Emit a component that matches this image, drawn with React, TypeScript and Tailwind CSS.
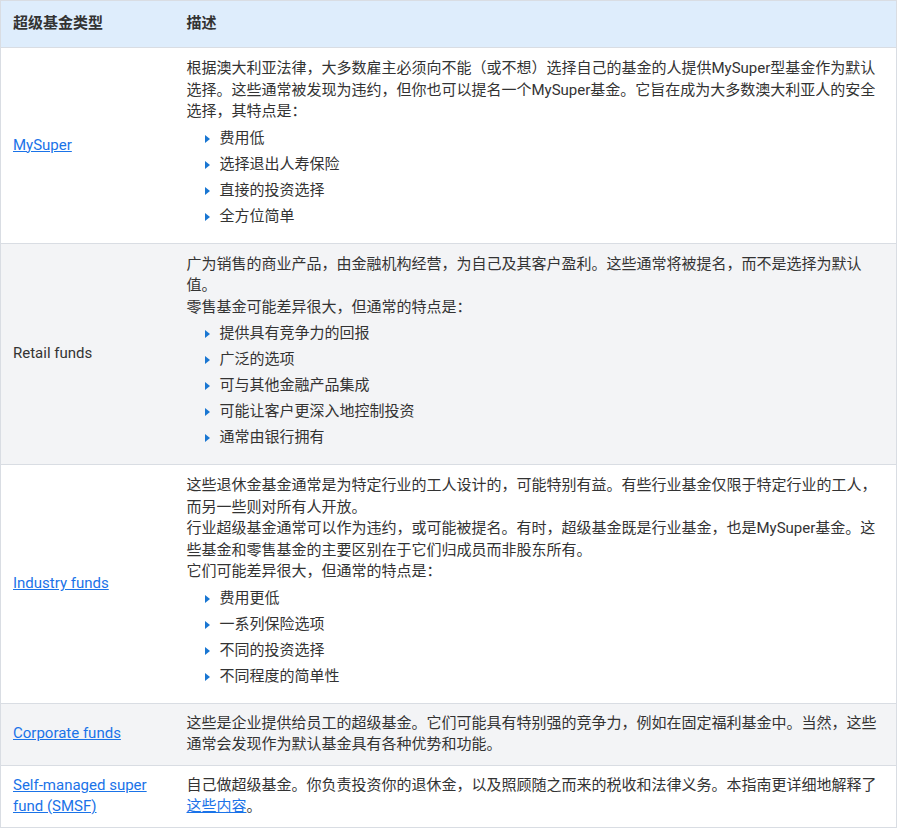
const font = { fontFamily: 'Roboto, "Noto Sans CJK SC", sans-serif' };

function Bullets({ items }: { items: string[] }) {
  return (
    <ul className="mt-[3px] mb-0 pl-[16px]">
      {items.map((t) => (
        <li key={t} className="flex items-center h-[26px]">
          <span className="w-0 h-0 border-y-[4px] border-y-transparent border-l-[5px] border-l-[#1976d2] mr-[10px] ml-[2px]" />
          {t}
        </li>
      ))}
    </ul>
  );
}

const A = ({ children }: { children: React.ReactNode }) => (
  <a href="#" className="text-[#1a73e8] underline">{children}</a>
);

export default function App() {
  return (
    <div style={font} className="bg-white text-[15px] leading-[21.5px] text-[#333] w-[897px]">
      <table className="w-full border-collapse border border-[#d9dde3]">
        <thead>
          <tr className="bg-[#deedfc] h-[47px] font-bold text-[#333]">
            <th className="text-left px-[12px] w-[174px] font-bold">超级基金类型</th>
            <th className="text-left px-[12px] font-bold">描述</th>
          </tr>
        </thead>
        <tbody>
          <tr className="border-t border-[#d9dde3]">
            <td className="px-[12px] align-middle"><A>MySuper</A></td>
            <td className="px-[12px] pt-[10px] pb-[13px]">
              <p>根据澳大利亚法律，大多数雇主必须向不能（或不想）选择自己的基金的人提供MySuper型基金作为默认选择。这些通常被发现为违约，但你也可以提名一个MySuper基金。它旨在成为大多数澳大利亚人的安全选择，其特点是：</p>
              <Bullets items={["费用低", "选择退出人寿保险", "直接的投资选择", "全方位简单"]} />
            </td>
          </tr>
          <tr className="border-t border-[#d9dde3] bg-[#f3f4f6]">
            <td className="px-[12px] align-middle">Retail funds</td>
            <td className="px-[12px] pt-[10px] pb-[13px]">
              <p>广为销售的商业产品，由金融机构经营，为自己及其客户盈利。这些通常将被提名，而不是选择为默认值。</p>
              <p>零售基金可能差异很大，但通常的特点是：</p>
              <Bullets items={["提供具有竞争力的回报", "广泛的选项", "可与其他金融产品集成", "可能让客户更深入地控制投资", "通常由银行拥有"]} />
            </td>
          </tr>
          <tr className="border-t border-[#d9dde3]">
            <td className="px-[12px] align-middle"><A>Industry funds</A></td>
            <td className="px-[12px] pt-[10px] pb-[13px]">
              <p>这些退休金基金通常是为特定行业的工人设计的，可能特别有益。有些行业基金仅限于特定行业的工人，而另一些则对所有人开放。</p>
              <p>行业超级基金通常可以作为违约，或可能被提名。有时，超级基金既是行业基金，也是MySuper基金。这些基金和零售基金的主要区别在于它们归成员而非股东所有。</p>
              <p>它们可能差异很大，但通常的特点是：</p>
              <Bullets items={["费用更低", "一系列保险选项", "不同的投资选择", "不同程度的简单性"]} />
            </td>
          </tr>
          <tr className="border-t border-[#d9dde3] bg-[#f3f4f6]">
            <td className="px-[12px] align-middle"><A>Corporate funds</A></td>
            <td className="px-[12px] py-[9px]">
              这些是企业提供给员工的超级基金。它们可能具有特别强的竞争力，例如在固定福利基金中。当然，这些通常会发现作为默认基金具有各种优势和功能。
            </td>
          </tr>
          <tr className="border-t border-[#d9dde3]">
            <td className="px-[12px] align-middle"><A>Self-managed super fund (SMSF)</A></td>
            <td className="px-[12px] py-[9px]">
              自己做超级基金。你负责投资你的退休金，以及照顾随之而来的税收和法律义务。本指南更详细地解释了<A>这些内容</A>。
            </td>
          </tr>
        </tbody>
      </table>
    </div>
  );
}
